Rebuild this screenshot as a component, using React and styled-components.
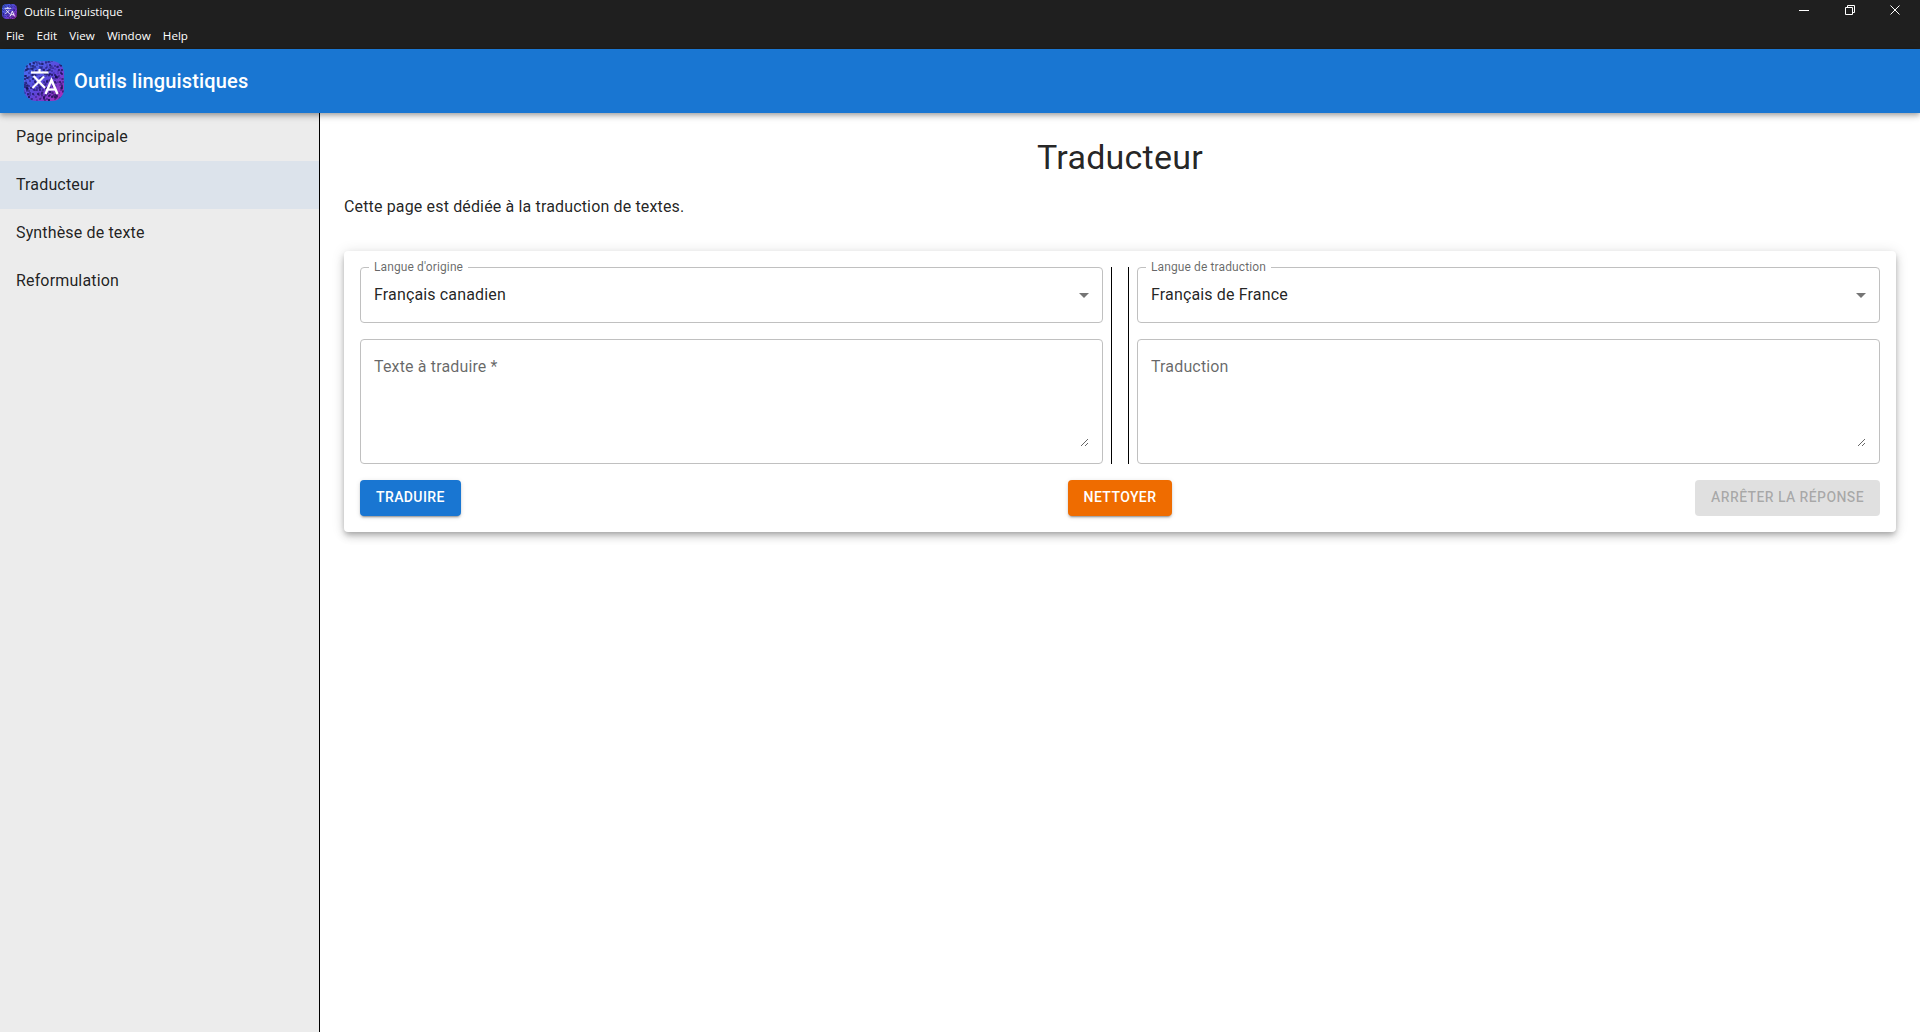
import React from 'react';
import styled, { createGlobalStyle } from 'styled-components';

const GlobalStyle = createGlobalStyle`
  html, body {
    margin: 0;
    height: 100%;
    overflow: hidden;
    background: #fff;
  }
  * { box-sizing: border-box; }
`;

const NAV_ITEMS = ['Page principale', 'Traducteur', 'Synthèse de texte', 'Reformulation'];
const MENU_ITEMS = ['File', 'Edit', 'View', 'Window', 'Help'];

// speckles on the logo, fixed seed so the picture never changes
const dots = [];
let seed = 7;
for (let i = 0; i < 340; i++) {
  seed = (seed * 16807) % 2147483647;
  const x = seed % 40;
  seed = (seed * 16807) % 2147483647;
  const y = seed % 40;
  seed = (seed * 16807) % 2147483647;
  dots.push({ x, y, r: 0.5 + (seed % 5) / 10 });
}

const Logo = ({ size, id }) => (
  <svg width={size} height={size} viewBox="0 0 40 40" style={{ display: 'block', flex: 'none' }}>
    <defs>
      <linearGradient id={id} x1="0" y1="0" x2="1" y2="1">
        <stop offset="0" stopColor="#4474f5" />
        <stop offset="0.55" stopColor="#5f44d8" />
        <stop offset="1" stopColor="#b42cb4" />
      </linearGradient>
      <clipPath id={`${id}-clip`}>
        <rect width="40" height="40" rx="12" />
      </clipPath>
    </defs>
    <g clipPath={`url(#${id}-clip)`}>
      <rect width="40" height="40" fill={`url(#${id})`} />
      {dots.map((d, i) => (
        <circle key={i} cx={d.x} cy={d.y} r={d.r} fill="#14104f" opacity="0.9" />
      ))}
    </g>
    <g fill="none" stroke="#fff" strokeWidth="2.2">
      <path d="M7 11.5H24.5" />
      <path d="M15.5 8V11.5" />
      <path d="M9.5 15L21 27" />
      <path d="M20 15.5L8.5 27" />
      <path d="M21.5 33L27.5 19L33.5 33" strokeWidth="2.4" />
      <path d="M23.5 28.5H31.5" />
    </g>
  </svg>
);

const App = () => {
  return (
    <>
      <GlobalStyle />
      <Page>
        <TitleBar>
          <TitleColumn>
            <TitleRow>
              <Logo size={15} id="logo-small" />
              <WindowTitle>Outils Linguistique</WindowTitle>
            </TitleRow>
            <MenuRow>
              {MENU_ITEMS.map((item) => (
                <MenuItem key={item}>{item}</MenuItem>
              ))}
            </MenuRow>
          </TitleColumn>
          <WindowControls>
            <WindowButton>
              <svg width="10" height="10" viewBox="0 0 10 10">
                <path d="M0 5.5H10" stroke="#fff" fill="none" />
              </svg>
            </WindowButton>
            <WindowButton>
              <svg width="10" height="10" viewBox="0 0 10 10">
                <path d="M0.5 2.5H7.5V9.5H0.5Z M2.5 2.5V0.5H9.5V7.5H7.5" stroke="#fff" fill="none" />
              </svg>
            </WindowButton>
            <WindowButton>
              <svg width="10" height="10" viewBox="0 0 10 10">
                <path d="M0.5 0.5L9.5 9.5M9.5 0.5L0.5 9.5" stroke="#fff" fill="none" />
              </svg>
            </WindowButton>
          </WindowControls>
        </TitleBar>

        <AppBar>
          <Logo size={40} id="logo-large" />
          <AppName>Outils linguistiques</AppName>
        </AppBar>

        <Body>
          <Sidebar>
            {NAV_ITEMS.map((item) => (
              <NavItem key={item} $active={item === 'Traducteur'}>
                {item}
              </NavItem>
            ))}
          </Sidebar>

          <Main>
            <Heading>Traducteur</Heading>
            <Intro>Cette page est dédiée à la traduction de textes.</Intro>

            <Card>
              <Columns>
                <Column>
                  <SelectBox>
                    <FloatingLabel>Langue d'origine</FloatingLabel>
                    <SelectValue>Français canadien</SelectValue>
                    <DropArrow viewBox="0 0 24 24">
                      <path d="M7 10l5 5 5-5z" />
                    </DropArrow>
                  </SelectBox>
                  <TextBox>
                    <TextArea placeholder="Texte à traduire *" />
                  </TextBox>
                </Column>

                <Divider />

                <Column>
                  <SelectBox>
                    <FloatingLabel>Langue de traduction</FloatingLabel>
                    <SelectValue>Français de France</SelectValue>
                    <DropArrow viewBox="0 0 24 24">
                      <path d="M7 10l5 5 5-5z" />
                    </DropArrow>
                  </SelectBox>
                  <TextBox>
                    <TextArea placeholder="Traduction" />
                  </TextBox>
                </Column>
              </Columns>

              <Actions>
                <ActionSlot>
                  <Button $bg="#1976d2">Traduire</Button>
                </ActionSlot>
                <Button $bg="#ef6c00">Nettoyer</Button>
                <ActionSlot $end>
                  <Button $disabled disabled>
                    Arrêter la réponse
                  </Button>
                </ActionSlot>
              </Actions>
            </Card>
          </Main>
        </Body>
      </Page>
    </>
  );
};

const Page = styled.div`
  display: flex;
  flex-direction: column;
  height: 100vh;
  font-family: Roboto, "Liberation Sans", sans-serif;
  color: rgba(0, 0, 0, 0.87);
`;

const TitleBar = styled.div`
  display: flex;
  justify-content: space-between;
  align-items: flex-start;
  height: 49px;
  flex: none;
  background: #1f1f1f;
  color: #fff;
  font-family: "Open Sans", "Noto Sans", sans-serif;
`;

const TitleColumn = styled.div`
  display: flex;
  flex-direction: column;
  gap: 1px;
`;

const TitleRow = styled.div`
  display: flex;
  align-items: center;
  height: 22px;
  padding-left: 2px;
  gap: 7px;
`;

const WindowTitle = styled.span`
  font-size: 11.4px;
`;

const MenuRow = styled.div`
  display: flex;
  align-items: center;
  height: 24px;
  padding-left: 6px;
  gap: 12.2px;
`;

const MenuItem = styled.span`
  font-size: 11.6px;
`;

const WindowControls = styled.div`
  display: flex;
  padding-right: 2px;
`;

const WindowButton = styled.div`
  display: flex;
  justify-content: center;
  align-items: center;
  width: 45.5px;
  height: 20px;
`;

const AppBar = styled.header`
  display: flex;
  align-items: center;
  gap: 10px;
  height: 64px;
  flex: none;
  padding-left: 24px;
  background: #1976d2;
  color: #fff;
  position: relative;
  z-index: 2;
  box-shadow: 0 2px 4px -1px rgba(0, 0, 0, 0.2), 0 4px 5px rgba(0, 0, 0, 0.14), 0 1px 10px rgba(0, 0, 0, 0.12);
`;

const AppName = styled.div`
  font-size: 20px;
  font-weight: 500;
  letter-spacing: 0.0075em;
`;

const Body = styled.div`
  display: flex;
  flex: 1;
  min-height: 0;
`;

const Sidebar = styled.nav`
  width: 320px;
  flex: none;
  background: #ececec;
  border-right: 1px solid #000;
`;

const NavItem = styled.div`
  display: flex;
  align-items: center;
  height: 48px;
  padding: 0 0 2px 16px;
  font-size: 16px;
  letter-spacing: 0.00938em;
  background: ${(p) => (p.$active ? '#dce3eb' : 'transparent')};
`;

const Main = styled.main`
  flex: 1;
  min-width: 0;
  padding: 24px 24px 0;
`;

const Heading = styled.h1`
  margin: 0 0 16px;
  font-size: 34px;
  font-weight: 400;
  line-height: 1.235;
  letter-spacing: 0.00735em;
  text-align: center;
`;

const Intro = styled.p`
  margin: 0 0 32px;
  font-size: 16px;
  line-height: 1.5;
  letter-spacing: 0.00938em;
`;

const Card = styled.section`
  padding: 16px;
  background: #fff;
  border-radius: 4px;
  box-shadow: 0 3px 5px -1px rgba(0, 0, 0, 0.2), 0 5px 8px rgba(0, 0, 0, 0.14), 0 1px 14px rgba(0, 0, 0, 0.12);
`;

const Columns = styled.div`
  display: grid;
  grid-template-columns: 1fr 34px 1fr;
`;

const Column = styled.div`
  display: flex;
  flex-direction: column;
  gap: 16px;
`;

const Divider = styled.div`
  width: 18px;
  margin: 0 8px;
  border-left: 1px solid #000;
  border-right: 1px solid #000;
`;

const SelectBox = styled.div`
  display: flex;
  justify-content: space-between;
  align-items: center;
  height: 56px;
  padding: 0 6px 0 13px;
  border: 1px solid #c0c0c0;
  border-radius: 4px;
  position: relative;
`;

const FloatingLabel = styled.span`
  position: absolute;
  left: 8px;
  top: -8px;
  padding: 0 5px;
  background: #fff;
  font-size: 12px;
  line-height: 15px;
  letter-spacing: 0.00938em;
  color: rgba(0, 0, 0, 0.6);
`;

const SelectValue = styled.span`
  font-size: 16px;
  letter-spacing: 0.00938em;
`;

const DropArrow = styled.svg`
  width: 24px;
  height: 24px;
  fill: rgba(0, 0, 0, 0.54);
`;

const TextBox = styled.div`
  display: flex;
  height: 125px;
  padding: 15px 13px 0;
  border: 1px solid #c0c0c0;
  border-radius: 4px;
`;

const TextArea = styled.textarea`
  flex: 1;
  height: 92px;
  padding: 0;
  border: 0;
  outline: 0;
  resize: both;
  font-family: inherit;
  font-size: 16px;
  line-height: 23px;
  letter-spacing: 0.00938em;
  color: inherit;
  background: transparent;

  &::placeholder {
    color: rgba(0, 0, 0, 0.6);
    opacity: 1;
  }
`;

const Actions = styled.div`
  display: grid;
  grid-template-columns: 1fr auto 1fr;
  align-items: center;
  margin-top: 16px;
`;

const ActionSlot = styled.div`
  display: flex;
  justify-content: ${(p) => (p.$end ? 'flex-end' : 'flex-start')};
`;

const Button = styled.button`
  height: 36px;
  padding: 5px 16px 7px;
  border: 0;
  border-radius: 4px;
  font-family: inherit;
  font-size: 14px;
  font-weight: 500;
  line-height: 1.75;
  letter-spacing: 0.02857em;
  text-transform: uppercase;
  color: ${(p) => (p.$disabled ? 'rgba(0, 0, 0, 0.26)' : '#fff')};
  background: ${(p) => (p.$disabled ? '#e0e0e0' : p.$bg)};
  box-shadow: ${(p) =>
    p.$disabled
      ? 'none'
      : '0 3px 1px -2px rgba(0, 0, 0, 0.2), 0 2px 2px rgba(0, 0, 0, 0.14), 0 1px 5px rgba(0, 0, 0, 0.12)'};
`;

export default App;
